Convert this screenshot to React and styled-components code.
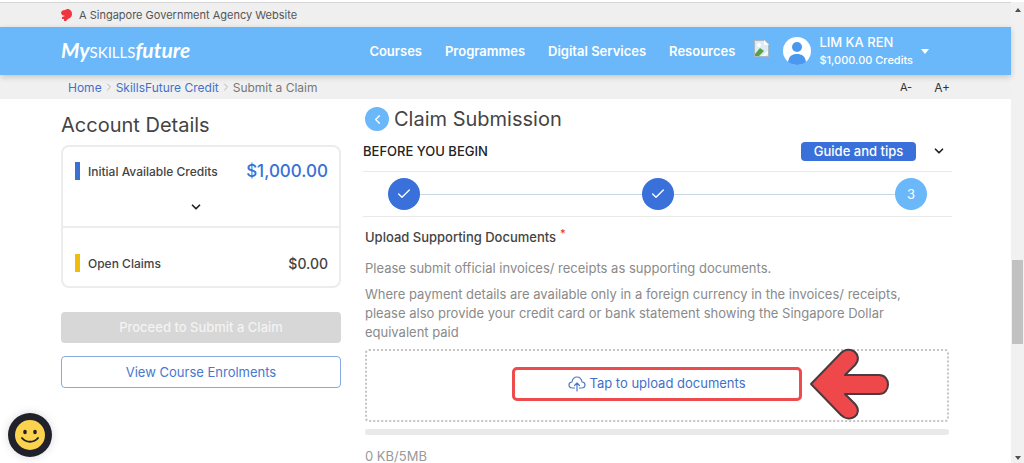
import React from "react";
import styled, { createGlobalStyle } from "styled-components";
import {
    LuCheck,
    LuChevronDown,
    LuChevronLeft,
    LuChevronRight,
} from "react-icons/lu";

const GlobalStyle = createGlobalStyle`
    * {
        box-sizing: border-box;
    }
    body {
        margin: 0;
        background: #fff;
        color: #444;
        font-family: "Inter", "Liberation Sans", sans-serif;
        font-size: 13px;
        line-height: 19px;
    }
    h1, h2, h3, p, ol, ul {
        margin: 0;
        padding: 0;
        list-style: none;
    }
    button {
        font: inherit;
        padding: 0;
        border: 0;
        background: none;
        color: inherit;
        cursor: pointer;
    }
    a {
        color: inherit;
        text-decoration: none;
    }
`;

const Window = styled.div`
    display: flex;
    height: 100vh;
    border-top: 2px solid #fff;
    overflow: hidden;
`;

const Page = styled.div`
    flex: 1;
    min-width: 0;
`;

const Masthead = styled.div`
    display: flex;
    align-items: center;
    gap: 6px;
    height: 25px;
    padding: 0 61px;
    border-top: 1px solid #d6d6d6;
    background: #efefef;
    font-size: 11px;
    color: #555;
`;

const Header = styled.header`
    position: relative;
    display: flex;
    align-items: center;
    height: 48px;
    padding: 0 82px 0 61px;
    background: #6ab8f9;
    color: #fff;
    box-shadow: 0 2px 6px rgba(0, 0, 0, 0.18);
`;

const Logo = styled.a`
    flex: 1;
    display: flex;
    align-items: baseline;
    font-family: "Lato", sans-serif;
    font-size: 15px;
`;

const Script = styled.span`
    font-size: 21px;
    font-style: italic;
    font-weight: 700;
`;

const Nav = styled.nav`
    display: flex;
    align-items: center;
    gap: 23px;
    font-weight: 600;
`;

const BrokenImage = styled.svg`
    margin: 0 14px 6px 19px;
`;

const Account = styled.button`
    display: flex;
    align-items: center;
    gap: 8px;
    text-align: left;
    font-weight: 500;
`;

const AccountText = styled.span`
    display: flex;
    flex-direction: column;
    line-height: 18px;
`;

const Credits = styled.span`
    font-size: 11px;
`;

const Caret = styled.span`
    border: 4px solid transparent;
    border-top: 5px solid #fff;
    border-bottom: 0;
`;

const SubBar = styled.div`
    display: flex;
    align-items: center;
    justify-content: space-between;
    height: 24px;
    padding: 0 61px 0 68px;
    background: #f0f0f0;
    font-size: 12px;
    color: #777;
`;

const Breadcrumb = styled.nav`
    display: flex;
    align-items: center;
    gap: 1px;
    svg {
        color: #b5b5b5;
    }
`;

const Crumb = styled.a`
    color: #4470cc;
`;

const TextSizes = styled.div`
    display: flex;
    align-items: center;
    gap: 22px;
    color: #333;
`;

const SizeButton = styled.button`
    font-size: ${(props) => (props.$large ? 12 : 11)}px;
`;

const Content = styled.main`
    display: grid;
    grid-template-columns: 280px minmax(0, 1fr);
    gap: 22px;
    padding: 8px 59px 0 61px;
`;

const Sidebar = styled.aside`
    padding-top: 6px;
`;

const Heading = styled.h2`
    font-size: 20px;
    font-weight: 400;
    line-height: 24px;
    color: #444;
`;

const Card = styled.section`
    margin: 8px 0 24px;
    border: 2px solid #ececec;
    border-radius: 8px;
`;

const CardPart = styled.div`
    padding: ${(props) => (props.$open ? "13px 11px 12px 12px" : "24px 11px 12px 12px")};
    border-top: ${(props) => (props.$open ? "0" : "2px solid #ececec")};
`;

const Balance = styled.div`
    display: flex;
    align-items: center;
    height: 22px;
    font-size: 12px;
    font-weight: 500;
    &::before {
        content: "";
        width: 5px;
        height: 18px;
        margin-right: 8px;
        background: ${(props) => props.$color};
    }
`;

const Amount = styled.strong`
    margin-left: auto;
    font-size: ${(props) => (props.$large ? 17 : 14)}px;
    font-weight: 500;
    color: ${(props) => (props.$large ? "#3a70d6" : "#444")};
`;

const Expand = styled.button`
    display: flex;
    justify-content: center;
    width: ${(props) => (props.$wide ? "100%" : "auto")};
    padding-right: ${(props) => (props.$wide ? "12px" : "0")};
    margin-top: ${(props) => (props.$wide ? "18px" : "0")};
    color: #222;
`;

const SideButton = styled.button`
    display: block;
    width: 100%;
    height: ${(props) => (props.$outline ? 32 : 31)}px;
    margin-bottom: 13px;
    border: ${(props) => (props.$outline ? "1px solid #86a9df" : "0")};
    border-radius: 4px;
    background: ${(props) => (props.$outline ? "#fff" : "#d7d7d7")};
    color: ${(props) => (props.$outline ? "#4877cf" : "#f3f3f3")};
    font-weight: ${(props) => (props.$outline ? 400 : 500)};
`;

const TitleRow = styled.div`
    display: flex;
    align-items: center;
    gap: 5px;
    padding-left: 2px;
`;

const Back = styled.button`
    display: grid;
    place-items: center;
    width: 24px;
    height: 24px;
    border-radius: 50%;
    background: #6ab8f9;
    color: #fff;
`;

const Before = styled.div`
    display: flex;
    align-items: center;
    height: 40px;
    padding-right: 6px;
`;

const BeforeTitle = styled.h3`
    flex: 1;
    font-size: 13px;
    font-weight: 500;
    color: #222;
`;

const Guide = styled.button`
    width: 115px;
    height: 19px;
    margin-right: 16px;
    border-radius: 4px;
    background: #3a70d9;
    color: #fff;
    font-weight: 500;
`;

const Steps = styled.ol`
    display: flex;
    align-items: center;
    height: 46px;
    padding: 0 25px;
    border: solid #e9e9e9;
    border-width: 1px 0;
`;

const Step = styled.li`
    display: flex;
    align-items: center;
    flex: ${(props) => (props.$current ? "none" : 1)};
    &::after {
        content: "";
        flex: 1;
        height: 1px;
        background: #c8d6e5;
    }
`;

const Dot = styled.span`
    display: grid;
    place-items: center;
    width: 32px;
    height: 32px;
    border-radius: 50%;
    background: ${(props) => (props.$current ? "#6ab8f9" : "#3a70d9")};
    color: #fff;
`;

const Upload = styled.section`
    padding: 11px 3px 0 2px;
`;

const UploadTitle = styled.h3`
    margin-bottom: 12px;
    font-size: 13px;
    font-weight: 500;
`;

const Required = styled.sup`
    margin-left: 4px;
    color: #e33;
    line-height: 0;
`;

const Note = styled.p`
    margin-bottom: 7px;
    padding-right: 20px;
    color: #8a8a8a;
`;

const DropZone = styled.div`
    position: relative;
    display: flex;
    align-items: center;
    justify-content: center;
    height: 73px;
    padding-bottom: 4px;
    border: 2px dotted #c4c4c4;
    border-radius: 4px;
`;

const UploadButton = styled.button`
    display: flex;
    align-items: center;
    justify-content: center;
    gap: 3px;
    width: 50%;
    height: 34px;
    border: 3px solid #ee4b4f;
    border-radius: 5px;
    color: #3f6fc9;
`;

const Pointer = styled.svg`
    position: absolute;
    top: -4px;
    right: 56px;
`;

const Quota = styled.div`
    height: 6px;
    margin: 7px 0 15px;
    border-radius: 3px;
    background: #e9e9e9;
`;

const QuotaText = styled.p`
    line-height: 12px;
    color: #999;
`;

const ChatButton = styled.button`
    position: fixed;
    left: 8px;
    bottom: 6px;
    width: 44px;
    height: 44px;
    border-radius: 50%;
    box-shadow: 0 0 10px rgba(0, 0, 0, 0.15);
`;

const Scrollbar = styled.div`
    display: flex;
    flex-direction: column;
    align-items: center;
    width: 13px;
    padding: 6px 0 3px;
    background: #f1f1f1;
`;

const Track = styled.div`
    display: flex;
    flex-direction: column;
    flex: 1;
    width: 11px;
`;

const TrackSpace = styled.div`
    flex: ${(props) => props.$grow};
`;

const Thumb = styled.div`
    flex: 84;
    background: #c1c1c1;
`;

const ScrollArrow = styled.span`
    border: 3px solid transparent;
    border-${(props) => (props.$up ? "bottom" : "top")}: 4px solid #505050;
    border-${(props) => (props.$up ? "top" : "bottom")}: 0;
`;

const links = ["Courses", "Programmes", "Digital Services", "Resources"];

function LionHead() {
    return (
        <svg width="12" height="13" viewBox="0 0 12 13" aria-hidden="true">
            <path
                d="M0 4C0 2 2 1 4 1L6 0C9 0 11 2 11 5C11 8 9 9 7 10L5 12L3 12L3 10L1 10L1 8L4 7L1 6Z"
                fill="#f0353e"
            />
        </svg>
    );
}

function UploadCloud() {
    return (
        <svg
            width="18"
            height="16"
            viewBox="0 0 18 16"
            fill="none"
            stroke="#4f79c8"
            strokeWidth="1.2"
            strokeLinecap="round"
            strokeLinejoin="round"
            aria-hidden="true"
        >
            <path d="M6.5 12H4.5C2.5 12 1 10.800 1 9s1.400-2.900 3-3C4.500 3 6.500 1 9 1s4.500 2 5 5c1.600.1 3 1.200 3 3s-1.500 3-3.500 3h-2M9 15V7M6.500 9.500 9 7l2.500 2.500" />
        </svg>
    );
}

export default function App() {
    return (
        <>
            <GlobalStyle />
            <Window>
                <Page>
                    <Masthead>
                        <LionHead />
                        A Singapore Government Agency Website
                    </Masthead>
                    <Header>
                        <Logo href="#">
                            <Script>My</Script>SKILLS<Script>future</Script>
                        </Logo>
                        <Nav>
                            {links.map((link) => (
                                <a href="#" key={link}>
                                    {link}
                                </a>
                            ))}
                        </Nav>
                        <BrokenImage width="15" height="17" viewBox="0 0 15 17">
                            <path d="M0 0h11l4 4v13H0Z" fill="#a9b8c5" />
                            <path d="M1 1h9v4h4v11H1Z" fill="#dcebf8" />
                            <path d="m10 0 5 5h-5Z" fill="#fff" />
                            <path d="m1 14 5-6 4 3-5 5H1Z" fill="#58a244" />
                            <path d="m8 16 6-5v2l-3 3Z" fill="#fff" />
                            <circle cx="5" cy="5" r="2" fill="#fff" />
                        </BrokenImage>
                        <Account>
                            <svg width="28" height="28" viewBox="0 0 28 28" aria-hidden="true">
                                <circle cx="14" cy="14" r="14" fill="#fff" />
                                <circle cx="14" cy="10" r="5" fill="#4b99ef" />
                                <path d="M5 25c1-6 4-8 9-8s8 2 9 8c-4 4-14 4-18 0Z" fill="#4b99ef" />
                            </svg>
                            <AccountText>
                                LIM KA REN
                                <Credits>$1,000.00 Credits</Credits>
                            </AccountText>
                            <Caret />
                        </Account>
                    </Header>
                    <SubBar>
                        <Breadcrumb aria-label="Breadcrumb">
                            <Crumb href="#">Home</Crumb>
                            <LuChevronRight size={12} />
                            <Crumb href="#">SkillsFuture Credit</Crumb>
                            <LuChevronRight size={12} />
                            <span>Submit a Claim</span>
                        </Breadcrumb>
                        <TextSizes>
                            <SizeButton>A-</SizeButton>
                            <SizeButton $large>A+</SizeButton>
                        </TextSizes>
                    </SubBar>
                    <Content>
                        <Sidebar>
                            <Heading>Account Details</Heading>
                            <Card>
                                <CardPart $open>
                                    <Balance $color="#3a70d6">
                                        Initial Available Credits
                                        <Amount $large>$1,000.00</Amount>
                                    </Balance>
                                    <Expand $wide aria-label="Show credits">
                                        <LuChevronDown size={14} strokeWidth={3} />
                                    </Expand>
                                </CardPart>
                                <CardPart>
                                    <Balance $color="#efbd10">
                                        Open Claims
                                        <Amount>$0.00</Amount>
                                    </Balance>
                                </CardPart>
                            </Card>
                            <SideButton disabled>Proceed to Submit a Claim</SideButton>
                            <SideButton $outline>View Course Enrolments</SideButton>
                        </Sidebar>
                        <div>
                            <TitleRow>
                                <Back aria-label="Back">
                                    <LuChevronLeft size={15} />
                                </Back>
                                <Heading as="h1">Claim Submission</Heading>
                            </TitleRow>
                            <Before>
                                <BeforeTitle>BEFORE YOU BEGIN</BeforeTitle>
                                <Guide>Guide and tips</Guide>
                                <Expand aria-label="Show guide">
                                    <LuChevronDown size={14} strokeWidth={3} />
                                </Expand>
                            </Before>
                            <Steps>
                                <Step>
                                    <Dot>
                                        <LuCheck size={16} />
                                    </Dot>
                                </Step>
                                <Step>
                                    <Dot>
                                        <LuCheck size={16} />
                                    </Dot>
                                </Step>
                                <Step $current>
                                    <Dot $current>3</Dot>
                                </Step>
                            </Steps>
                            <Upload>
                                <UploadTitle>
                                    Upload Supporting Documents
                                    <Required>*</Required>
                                </UploadTitle>
                                <Note>
                                    Please submit official invoices/ receipts as supporting documents.
                                </Note>
                                <Note>
                                    Where payment details are available only in a foreign currency in
                                    the invoices/ receipts, please also provide your credit card or
                                    bank statement showing the Singapore Dollar equivalent paid
                                </Note>
                                <DropZone>
                                    <UploadButton>
                                        <UploadCloud />
                                        Tap to upload documents
                                    </UploadButton>
                                    <Pointer width="82" height="74" viewBox="0 0 82 74" aria-hidden="true">
                                        <path
                                            d="M2 37 32 6C41-3 55 8 46 18L36 28H70C82 28 82 47 70 47H36L46 57C55 67 41 77 32 68Z"
                                            fill="#ee484b"
                                            stroke="#4a3b40"
                                            strokeWidth="2"
                                            strokeLinejoin="round"
                                        />
                                    </Pointer>
                                </DropZone>
                                <Quota />
                                <QuotaText>0 KB/5MB</QuotaText>
                            </Upload>
                        </div>
                    </Content>
                </Page>
                <Scrollbar aria-hidden="true">
                    <ScrollArrow $up />
                    <Track>
                        <TrackSpace $grow={247} />
                        <Thumb />
                        <TrackSpace $grow={112} />
                    </Track>
                    <ScrollArrow />
                </Scrollbar>
            </Window>
            <ChatButton aria-label="Open chat">
                <svg width="44" height="44" viewBox="0 0 44 44">
                    <circle cx="22" cy="22" r="22" fill="#20212a" />
                    <circle cx="22" cy="22" r="15" fill="#fcd34f" />
                    <ellipse cx="17" cy="19" rx="1.800" ry="2.300" fill="#20212a" />
                    <ellipse cx="27" cy="19" rx="1.800" ry="2.300" fill="#20212a" />
                    <path
                        d="M14 25c4 5 12 5 16 0"
                        fill="none"
                        stroke="#20212a"
                        strokeWidth="2"
                        strokeLinecap="round"
                    />
                </svg>
            </ChatButton>
        </>
    );
}
